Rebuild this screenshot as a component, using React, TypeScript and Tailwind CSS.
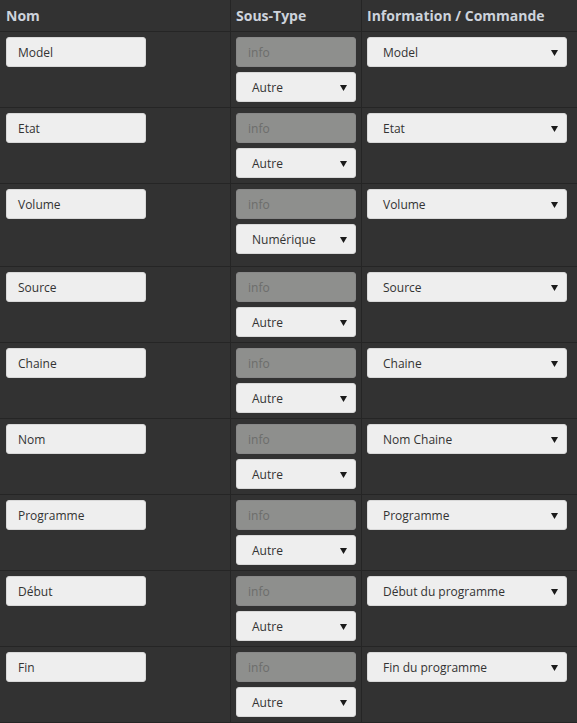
const rows = [
  { nom: "Model", sousType: "Autre", cmd: "Model" },
  { nom: "Etat", sousType: "Autre", cmd: "Etat" },
  { nom: "Volume", sousType: "Numérique", cmd: "Volume", tall: true },
  { nom: "Source", sousType: "Autre", cmd: "Source" },
  { nom: "Chaine", sousType: "Autre", cmd: "Chaine" },
  { nom: "Nom", sousType: "Autre", cmd: "Nom Chaine" },
  { nom: "Programme", sousType: "Autre", cmd: "Programme" },
  { nom: "Début", sousType: "Autre", cmd: "Début du programme" },
  { nom: "Fin", sousType: "Autre", cmd: "Fin du programme" },
]

function Arrow() {
  return (
    <svg width="7" height="6" viewBox="0 0 7 6" className="shrink-0">
      <path d="M0 0 L7 0 L3.5 6 Z" fill="#1a1a1a" />
    </svg>
  )
}

function FakeSelect({ value, width }: { value: string; width: string }) {
  return (
    <div
      className={`${width} h-[30px] flex items-center justify-between pl-[15px] pr-[8px] pt-[2px] bg-[#eeeeee] border border-[#d8d8d8] rounded-[3px] text-[12px] text-[#333]`}
    >
      <span>{value}</span>
      <Arrow />
    </div>
  )
}

export default function App() {
  return (
    <div
      className="w-[577px] h-[723px] overflow-hidden bg-[#323232]"
      style={{ fontFamily: '"Open Sans", "Liberation Sans", sans-serif' }}
    >
      <div className="flex h-[32px] border-b border-[#252525] text-[14px] font-bold text-[#cdd3dc]">
        <div className="w-[231px] border-r border-[#252525] pl-[6px] flex items-center">
          Nom
        </div>
        <div className="w-[131px] border-r border-[#252525] pl-[5px] flex items-center">
          Sous-Type
        </div>
        <div className="flex-1 pl-[5px] flex items-center">
          Information / Commande
        </div>
      </div>

      {rows.map((r) => (
        <div
          key={r.nom}
          className={`flex border-b border-[#252525] ${r.tall ? "h-[83px]" : "h-[76px]"}`}
        >
          <div className="w-[231px] border-r border-[#252525] pl-[6px] pt-[5px]">
            <div className="w-[140px] h-[30px] flex items-center pl-[11px] pt-[2px] bg-[#eeeeee] border border-[#d8d8d8] rounded-[3px] text-[12px] text-[#333]">
              {r.nom}
            </div>
          </div>
          <div className="w-[131px] border-r border-[#252525] pl-[5px] pt-[5px] flex flex-col gap-[5px]">
            <div className="w-[120px] h-[30px] flex items-center pl-[11px] pt-[2px] bg-[#8e8f8d] border border-[#888] rounded-[3px] text-[12px] text-[#6c6d6b]">
              info
            </div>
            <FakeSelect value={r.sousType} width="w-[120px]" />
          </div>
          <div className="flex-1 pl-[5px] pt-[5px]">
            <FakeSelect value={r.cmd} width="w-[200px]" />
          </div>
        </div>
      ))}
    </div>
  )
}
